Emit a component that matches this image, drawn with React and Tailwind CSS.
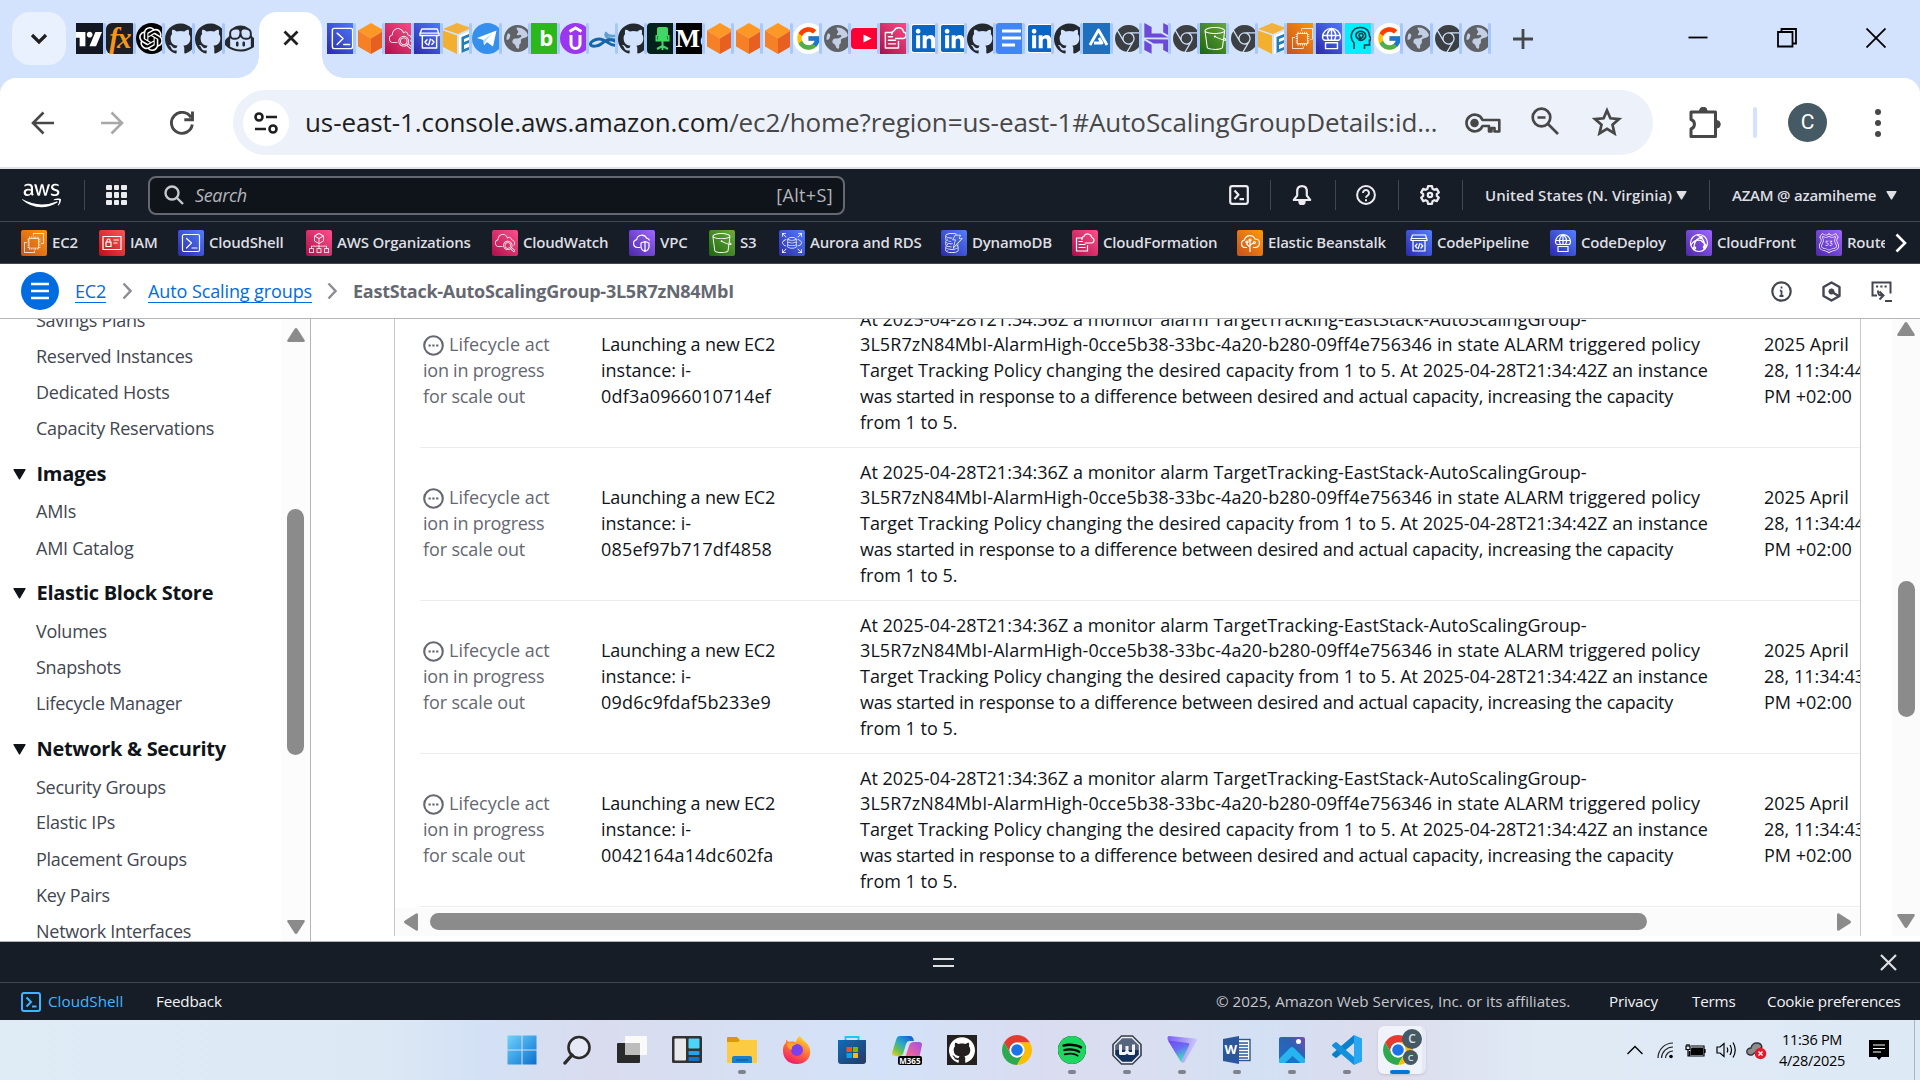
import {
  SiGithub, SiGithubcopilot, SiOpenai, SiTradingview, SiGooglechrome, SiHostinger,
  SiSpotify, SiAmazonec2, SiAmazons3, SiAmazonrds, SiAmazondynamodb,
  SiAmazoncloudwatch, SiAmazonroute53, SiAwsorganizations,
} from "react-icons/si";
import { FaAws, FaLinkedin, FaEarthAmericas } from "react-icons/fa6";
import { FcGoogle } from "react-icons/fc";

/* ---------- AWS service glyphs ---------- */

const ORANGE = "bg-linear-to-tr from-[#c8511b] to-[#ff9900]";
const RED = "bg-linear-to-tr from-[#bd0816] to-[#ff5252]";
const BLUE = "bg-linear-to-tr from-[#2e27ad] to-[#527fff]";
const PINK = "bg-linear-to-tr from-[#b0084d] to-[#ff4f8b]";
const PURPLE = "bg-linear-to-tr from-[#4d27aa] to-[#a166ff]";
const GREEN = "bg-linear-to-tr from-[#1b660f] to-[#6cae3e]";

function Glyph({ children, className = "size-full" }) {
  return (
    <svg viewBox="0 0 26 26" className={className} fill="none" stroke="currentColor" strokeWidth="1.2" strokeLinejoin="round" strokeLinecap="round">
      {children}
    </svg>
  );
}

const CloudShellGlyph = () => (
  <Glyph>
    <rect x="4.5" y="4.5" width="17" height="17" rx="1.5" />
    <path d="M8.5 8.5l5 4.5-5 5M14 18h5" />
  </Glyph>
);
const IamGlyph = () => (
  <Glyph>
    <rect x="4" y="6.5" width="18" height="13" />
    <rect x="7" y="12" width="5" height="4.5" />
    <path d="M8 12v-1.5a1.5 1.5 0 0 1 3 0V12M15 10h4.5M15 13h3" />
  </Glyph>
);
const VpcGlyph = () => (
  <Glyph>
    <path d="M11 17.5H8.5a4 4 0 0 1-.8-7.9 5.2 5.2 0 0 1 9.8-1.5 3.4 3.4 0 0 1 2.8 2" />
    <path d="M16 11.5l4 1.5v3.5c0 2.5-1.8 4.2-4 5-2.2-.8-4-2.5-4-5V13zM16 11.5v10" />
  </Glyph>
);
const CloudFormationGlyph = () => (
  <Glyph>
    <path d="M15.5 15.5V21h-11V8h6M7 11.5h3.5M7 14.5h6M7 17.5h6" />
    <path d="M13 13h6.5a2.8 2.8 0 0 0 .3-5.5 4.2 4.2 0 0 0-8-1 2.5 2.5 0 0 0-1.8 3" />
  </Glyph>
);
const BeanstalkGlyph = () => (
  <Glyph>
    <path d="M9.5 17.5H8a3.8 3.8 0 0 1-.5-7.5 5.5 5.5 0 0 1 10.5-1 4.2 4.2 0 0 1 .5 8.5h-2" />
    <path d="M13 21.5V11M13 17l-3-2.5V13M13 15l3.5-2" />
    <circle cx="13" cy="10" r="1" /><circle cx="10" cy="12" r="1" /><circle cx="17.3" cy="12.5" r="1" />
  </Glyph>
);
const CodePipelineGlyph = () => (
  <Glyph>
    <path d="M5 9.5L6.5 5h13L21 9.5v1H5zM5 8.5h16M7 10.5V21h12V10.5M11 14l-1.8 2 1.800 2M15 14l1.800 2-1.800 2M13.700 13.5l-1.400 5" />
  </Glyph>
);
const CodeDeployGlyph = () => (
  <Glyph>
    <path d="M5.5 12a7.5 7.5 0 0 1 15 0c0 1.3-1 2.5-2 2.5h-11c-1 0-2-1.2-2-2.5zM6 10.5h14M13 4.5v10M13 4.5c-4 3-4 7-2.5 10M13 4.5c4 3 4 7 2.5 10M8 16.5h10v5H8z" />
  </Glyph>
);
const CloudFrontGlyph = () => (
  <Glyph>
    <circle cx="13" cy="13" r="8.5" />
    <path d="M8 20c-.5-6 2-11 7-13M15 7c3.5 4 4.5 8 3 12.5M5 15c2-3.5 6-5.5 10-4.5M11 5l4 2M15 10.5l5.5 5" />
    <circle cx="15" cy="7.5" r="1.200" /><circle cx="8.5" cy="18" r="1.200" /><circle cx="18.5" cy="17" r="1.200" />
  </Glyph>
);

/* ---------- Favicons for the tab strip ---------- */

const fav = "size-[31px] shrink-0";

const Box = ({ tone, children, pad = "p-0" }) => (
  <span className={`flex items-center justify-center text-white ${fav} ${tone} ${pad}`}>{children}</span>
);
const TvIcon = () => <Box tone="bg-[#131722]"><SiTradingview className="size-7 -ml-2" /></Box>;
const FxIcon = () => (
  <Box tone="bg-[#1d1f24] rounded-md">
    <span className="-ml-1 font-['Liberation_Serif',serif] text-[29px] leading-none font-bold tracking-[-2px] text-[#f7941d] italic">fx</span>
  </Box>
);
const OpenAiIcon = () => <Box tone="bg-black rounded-full"><SiOpenai className="size-6" /></Box>;
const GhIcon = () => <SiGithub className={`${fav} text-[#24292f]`} />;
const CopilotIcon = () => <SiGithubcopilot className={`${fav} text-[#24292f]`} />;
const CsIcon = () => <Box tone={BLUE}><CloudShellGlyph /></Box>;
const CubeIcon = () => (
  <svg viewBox="0 0 31 31" className={fav}>
    <path d="M15 0L28 7.5 15 15.5 2 7.5z" fill="#fd9827" />
    <path d="M2 7.5l13 8V31L2 23.5z" fill="#f58025" />
    <path d="M28 7.5l-13 8V31l13-7.5z" fill="#e8601f" />
  </svg>
);
const CwIcon = () => <Box tone={PINK} pad="p-1"><SiAmazoncloudwatch className="size-full" /></Box>;
const CpIcon = () => <Box tone={BLUE}><CodePipelineGlyph /></Box>;
const CdIcon = () => <Box tone={BLUE}><CodeDeployGlyph /></Box>;
const CfIcon = () => <Box tone={PINK}><CloudFormationGlyph /></Box>;
const S3Icon = () => <Box tone={GREEN} pad="p-1"><SiAmazons3 className="size-full" /></Box>;
const Ec2Icon = () => <Box tone={ORANGE} pad="p-[5px]"><SiAmazonec2 className="size-full" /></Box>;
const PackageIcon = () => (
  <svg viewBox="0 0 31 31" className={fav}>
    <path d="M0 6L14 0l14 5-13 6z" fill="#f0b23c" />
    <path d="M0 7.5l14 5V31L0 24z" fill="#f2b02e" />
    <path d="M16 12.5L29 7v18l-13 6z" fill="#fff" />
    <path d="M18.5 14l9-3.5v3L21 16v3l6-2.5v3L21 22v4l7-2.800v2.800l-9.5 4z" fill="#1f7fb8" />
  </svg>
);
const TelegramIcon = () => (
  <svg viewBox="0 0 31 31" className={fav}>
    <circle cx="15.5" cy="15.5" r="15.5" fill="#3490ec" />
    <path d="M5 15L24.5 7.5 21 23.5l-6-4.300-3 3-.6-5.200z" fill="#fff" />
    <path d="M11.400 17l8.600-6.200-6.5 7.5-1.5 3.700z" fill="#bcdcf8" />
  </svg>
);
const GlobeIcon = () => (
  <span className="ml-0.5 flex size-[27px] shrink-0 rounded-full bg-[#c3cfe4]">
    <FaEarthAmericas className="size-[27px] shrink-0 -scale-x-100 text-[#5f6368]" />
  </span>
);
const BIcon = () => (
  <Box tone="bg-[#2bb81b]"><span className="-mt-1 font-['Open_Sans',sans-serif] text-[22px] leading-none font-bold">b</span></Box>
);
const UpIcon = () => (
  <svg viewBox="0 0 31 31" className={fav}>
    <circle cx="15.5" cy="15.5" r="15.5" fill="#9a35f0" />
    <path d="M11 12v9a4.5 4.5 0 0 0 9 0v-9M9.5 8.5l6-3.5 6 3.5" fill="none" stroke="#fff" strokeWidth="3" />
  </svg>
);
const WhaleIcon = () => (
  <svg viewBox="0 0 31 31" className={fav} fill="none" strokeLinecap="round">
    <path d="M17 10c2 4 9 3 11 2M17 10c-2 5 4 6 10 6" stroke="#5f9fd0" strokeWidth="2.400" />
    <path d="M27 22c-6 2-9-6-17-6-4 0-9 3-8.500 5.500C2.500 24 9 23.500 12 21s7-6 14-3" stroke="#1566a8" strokeWidth="3" />
  </svg>
);
const ChairIcon = () => (
  <svg viewBox="0 0 31 31" className={fav}>
    <rect width="31" height="31" rx="4" fill="#04211b" />
    <rect x="10" y="4" width="11" height="10" rx="2" fill="#3fd864" />
    <path d="M9.5 12v5.5h12V12M15.5 18v9M10 26l5.500-3 5.500 3" stroke="#3fd864" strokeWidth="2" fill="none" />
    <path d="M11 14h9v4h-9z" fill="#3fd864" />
  </svg>
);
const MediumIcon = () => (
  <Box tone="bg-black"><span className="ml-1 font-['Liberation_Serif',serif] text-[26px] leading-none font-bold">Mc</span></Box>
);
const GIcon = () => <Box tone="bg-white rounded-full"><FcGoogle className="size-[27px]" /></Box>;
const YtIcon = () => (
  <svg viewBox="0 0 31 31" className={fav}>
    <rect y="5" width="31" height="21" rx="4" fill="#ff0033" />
    <path d="M12.5 11.5l8 4-8 4z" fill="#fff" />
  </svg>
);
const InIcon = () => (
  <span className="ml-0.5 flex size-[29px] shrink-0 items-center justify-center overflow-hidden rounded-[3px] bg-[linear-gradient(#fff,#fff)]">
    <FaLinkedin className="size-[31px] shrink-0 text-[#0a66c2]" />
  </span>
);
const DocsIcon = () => (
  <svg viewBox="0 0 31 31" className={fav}>
    <rect width="31" height="31" rx="3" fill="#4285f4" />
    <path d="M6 8h19M6 15h19M6 22h13" stroke="#fff" strokeWidth="3" />
  </svg>
);
const AIcon = () => (
  <svg viewBox="0 0 31 31" className={fav}>
    <rect width="31" height="31" fill="#1f6fbf" />
    <path d="M7 22L15.5 7l8.500 15M11 20h8l-3-5" fill="none" stroke="#fff" strokeWidth="2.800" strokeLinejoin="round" />
  </svg>
);
const GreyChrome = () => <SiGooglechrome className="ml-0.5 size-[27px] shrink-0 text-[#3c4043]" />;
const HIcon = () => <SiHostinger className={`${fav} text-[#6b4bd6]`} />;
const HeadIcon = () => (
  <svg viewBox="0 0 31 31" className={fav}>
    <rect width="31" height="31" fill="#00f0ff" />
    <path d="M9 26v-6c-5-5-3-15 6-15.500 7-.300 9.500 4.500 9.500 8.500l2 4h-2v5h-5v4M16 14.500a2 2 0 1 1 2-2.500 3.500 3.500 0 1 1-5.500-2.500c4-3 9 0 8 4.500-.700 3-4.500 4-7 3" fill="none" stroke="#0b3d46" strokeWidth="1.600" />
  </svg>
);

const leftTabs = [TvIcon, FxIcon, OpenAiIcon, GhIcon, GhIcon, CopilotIcon];
const rightTabs = [
  CsIcon, CubeIcon, CwIcon, CpIcon, PackageIcon, TelegramIcon, GlobeIcon, BIcon, UpIcon, WhaleIcon,
  GhIcon, ChairIcon, MediumIcon, CubeIcon, CubeIcon, CubeIcon, GIcon, GlobeIcon, YtIcon, CfIcon,
  InIcon, InIcon, GhIcon, DocsIcon, InIcon, GhIcon, AIcon, GreyChrome, HIcon, GreyChrome,
  S3Icon, GreyChrome, PackageIcon, Ec2Icon, CdIcon, HeadIcon, GIcon, GlobeIcon, GreyChrome, GlobeIcon,
];

function MiniTab({ icon: Icon, divider = true }) {
  return (
    <div className="flex h-[31px] min-w-0 flex-1 items-center">
      <div className="flex h-full min-w-0 flex-1 items-center overflow-hidden"><Icon /></div>
      <span className={divider ? "h-[31px] w-[3px] shrink-0 rounded-full bg-[#a8c7fa]" : "w-px shrink-0"} />
    </div>
  );
}

function TabStrip() {
  return (
    <div className="flex h-[78px] items-start">
      <div className="mt-3 ml-3 flex h-[53px] w-[54px] shrink-0 items-center justify-center rounded-[18px] bg-[#e9f0fe]">
        <svg viewBox="0 0 18 12" className="h-3 w-[18px]" fill="none" stroke="#1f1f1f" strokeWidth="3.200"><path d="M2 2l7 7 7-7" /></svg>
      </div>
      <div className="mt-[23px] ml-[10px] flex w-[179px]">
        {leftTabs.map((I, i) => <MiniTab key={i} icon={I} divider={i < 5} />)}
      </div>
      <div className="relative mt-3 ml-1 flex h-[66px] w-[63px] shrink-0 items-center justify-center rounded-t-[18px] bg-white pb-3.5">
        <span className="absolute bottom-0 -left-[22px] size-[22px] bg-[radial-gradient(circle_at_top_left,transparent_21.5px,#fff_22px)]" />
        <span className="absolute -right-[22px] bottom-0 size-[22px] bg-[radial-gradient(circle_at_top_right,transparent_21.5px,#fff_22px)]" />
        <svg viewBox="0 0 16 16" className="size-4" stroke="#1f1f1f" strokeWidth="2.800"><path d="M1.5 1.5l13 13M14.5 1.5l-13 13" /></svg>
      </div>
      <div className="mt-[23px] ml-[5px] flex w-[1164px]">
        {rightTabs.map((I, i) => <MiniTab key={i} icon={I} />)}
      </div>
      <svg viewBox="0 0 20 20" className="mt-[29px] ml-[22px] size-5 shrink-0" stroke="#474747" strokeWidth="2.800"><path d="M10 0v20M0 10h20" /></svg>
      <div className="mt-[28px] mr-[34px] ml-auto flex items-center gap-[69px]">
        <svg viewBox="0 0 20 20" className="size-5" stroke="#000" strokeWidth="1.800"><path d="M.5 9.500h19" /></svg>
        <svg viewBox="0 0 20 20" className="size-5" fill="none" stroke="#000" strokeWidth="1.800"><path d="M1 4h14.500v14.500H1zM4.500 3.500V1H19v14.500h-3" /></svg>
        <svg viewBox="0 0 20 20" className="size-5" stroke="#000" strokeWidth="1.800"><path d="M.5 .5l19 19M19.500 .5l-19 19" /></svg>
      </div>
    </div>
  );
}

function Toolbar() {
  return (
    <div className="flex h-[91px] items-center rounded-t-[16px] border-b-2 border-[#e1e3e1] bg-white">
      <svg viewBox="0 0 24 24" className="ml-[31px] size-6" fill="none" stroke="#474747" strokeWidth="2.600"><path d="M23 12H2M12.500 1.500L2 12l10.500 10.500" /></svg>
      <svg viewBox="0 0 24 24" className="ml-[45px] size-6" fill="none" stroke="#a8a8a8" strokeWidth="2.600"><path d="M1 12h21M11.500 1.500L22 12 11.500 22.500" /></svg>
      <svg viewBox="0 0 24 24" className="ml-[46px] size-6" fill="none" stroke="#474747" strokeWidth="2.900"><path d="M22.300 13.500A10.500 10.500 0 1 1 21 6.500M22.500 .5v8.200h-8.200" /></svg>
      <div className="ml-[39px] flex h-[65px] w-[1420px] items-center rounded-full bg-[#ecf1fa]">
        <span className="ml-2.5 flex size-[46px] items-center justify-center rounded-full bg-white">
          <svg viewBox="0 0 24 24" className="size-6" fill="none" stroke="#1f1f1f" strokeWidth="2.600"><circle cx="5" cy="6" r="3.500" /><circle cx="19" cy="18" r="3.500" /><path d="M12 6h11M1 18h11" /></svg>
        </span>
        <span className="ml-4 w-[1145px] font-['Open_Sans',sans-serif] text-[26px] tracking-[-0.0035em] whitespace-nowrap text-[#474747]">
          <span className="text-[#1f1f1f]">us-east-1.console.aws.amazon.com</span>/ec2/home?region=us-east-1#AutoScalingGroupDetails:id…
        </span>
        <svg viewBox="0 0 36 20" className="ml-[15px] h-5 w-9 shrink-0" fill="none" stroke="#474747" strokeWidth="2.600">
          <circle cx="9.500" cy="10" r="3" fill="#474747" />
          <path d="M17.500 7A8.300 8.300 0 1 0 17.500 13h6.500v5.500h2.500V15h3v3.500h4.800V7z" strokeLinejoin="round" />
        </svg>
        <svg viewBox="0 0 28 28" className="mt-[-3px] ml-[30px] size-7 shrink-0" fill="none" stroke="#474747" strokeWidth="2.700"><circle cx="10.500" cy="10.500" r="8.800" /><path d="M17 17l10 10M6.500 10.500h8" /></svg>
        <svg viewBox="0 0 32 32" className="mt-[-2px] ml-8 size-8 shrink-0" fill="none" stroke="#474747" strokeWidth="2.700"><path d="M16 4.500l3.400 7.800 8.600.800-6.500 5.700 2 8.600-7.500-4.600-7.500 4.600 2-8.600L4 13.100l8.600-.800z" /></svg>
      </div>
      <svg viewBox="0 0 32 32" className="ml-9 size-8" fill="none" stroke="#474747" strokeWidth="3" strokeLinejoin="round">
        <path d="M2 5h24.500v24.500H2v-7.500a5 5 0 0 0 0-9.500z" />
        <path d="M10.500 4a3.800 3.800 0 0 1 7.600 0zM27.500 13.500a3.800 3.800 0 0 1 0 7.600z" fill="#474747" strokeWidth="1" />
      </svg>
      <span className="ml-8 h-[31px] w-1 rounded-full bg-[#d3e3fd]" />
      <span className="ml-[31px] flex size-[39px] items-center justify-center rounded-full bg-[#455a64] font-[Roboto,sans-serif] text-[21px] text-white">C</span>
      <span className="ml-[48px] flex flex-col gap-[5px]">
        <i className="size-1.5 rounded-full bg-[#474747]" /><i className="size-1.5 rounded-full bg-[#474747]" /><i className="size-1.5 rounded-full bg-[#474747]" />
      </span>
    </div>
  );
}

/* ---------- AWS console header ---------- */

const Caret = ({ className = "" }) => (
  <svg viewBox="0 0 12 10" className={`h-[9px] w-[11px] ${className}`} fill="currentColor"><path d="M1 0h10q1 0 .5 1L6.700 9.300q-.700 1-1.400 0L.5 1Q0 0 1 0z" /></svg>
);
const Divider = ({ className }) => <span className={`h-[30px] w-px shrink-0 bg-[#424650] ${className}`} />;

function ConsoleHeader() {
  return (
    <div className="flex h-[53px] shrink-0 items-center border-b border-[#424650] bg-[#161d26] text-[15px] font-semibold text-[#dedee3]">
      <FaAws className="ml-[22px] size-[39px] shrink-0 text-white" />
      <Divider className="ml-[23px]" />
      <div className="ml-[21px] grid grid-cols-3 gap-[2px]">
        {Array.from({ length: 9 }, (_, i) => <i key={i} className="size-[5.5px] rounded-[1px] bg-[#ebebf0]" />)}
      </div>
      <div className="ml-[21.500px] flex h-[39px] w-[697px] shrink-0 items-center rounded-lg border-2 border-[#656871] bg-[#0f141a] text-lg font-normal text-[#b4b4bb]">
        <svg viewBox="0 0 20 20" className="ml-3.5 size-5" fill="none" stroke="#c6c6cd" strokeWidth="2.400"><circle cx="8" cy="8" r="6.500" /><path d="M12.500 12.500L19 19" /></svg>
        <span className="ml-[11px] tracking-[-0.02em] italic">Search</span>
        <span className="mr-[10px] ml-auto tracking-[0.02em]">[Alt+S]</span>
      </div>
      <svg viewBox="0 0 20 20" className="ml-[384px] size-5 shrink-0" fill="none" stroke="#ebebf0" strokeWidth="2.200" strokeLinejoin="round"><rect x="1.200" y="1.200" width="17.600" height="17.600" rx="2" /><path d="M5.500 5.500l4 4.200-4 4.300M10.500 14.200h4.500" /></svg>
      <Divider className="ml-[21px]" />
      <svg viewBox="0 0 20 20" className="ml-[21px] size-5 shrink-0" fill="none" stroke="#ebebf0" strokeWidth="2.200" strokeLinejoin="round"><path d="M10 1.200c-3.300 0-4.800 2.300-4.800 5.300v4L1.800 15h16.400l-3.400-4.500v-4c0-3-1.500-5.300-4.800-5.300z" /><path d="M7 16.500a3 3 0 0 0 6 0z" fill="#ebebf0" strokeWidth="1.500" /></svg>
      <Divider className="ml-[23px]" />
      <svg viewBox="0 0 20 20" className="ml-5 size-5 shrink-0" fill="none" stroke="#ebebf0" strokeWidth="2"><circle cx="10" cy="10" r="8.900" /><path d="M7 8a3 3 0 1 1 4.600 2.500c-1.100.700-1.600 1-1.600 2.200M10 14.200v2" /></svg>
      <Divider className="ml-[22px]" />
      <svg viewBox="0 0 20 20" className="ml-[21px] size-5 shrink-0" fill="none" stroke="#ebebf0" strokeWidth="2.200" strokeLinejoin="round"><path d="M8 1.200h4l.5 2.600 1.800 1 2.500-.900 2 3.500-2 1.700v1.800l2 1.700-2 3.500-2.500-.900-1.800 1-.5 2.600H8l-.5-2.600-1.800-1-2.500.900-2-3.500 2-1.700V9.100l-2-1.700 2-3.500 2.500.900 1.800-1z" /><circle cx="10" cy="10" r="2.200" /></svg>
      <Divider className="ml-[22px]" />
      <span className="ml-[22px] w-[184px] tracking-[0.004em] whitespace-nowrap">United States (N. Virginia)</span>
      <Caret className="ml-[7px]" />
      <Divider className="ml-[22px]" />
      <span className="ml-[22px] w-[148px] tracking-[-0.015em] whitespace-nowrap">AZAM @ azamiheme</span>
      <Caret className="ml-1.5" />
    </div>
  );
}

const Pad = ({ icon: Icon }) => <Icon className="size-full p-[3px]" />;
const services = [
  { name: "EC2", w: "w-[78px]", tone: ORANGE, icon: <Pad icon={SiAmazonec2} /> },
  { name: "IAM", w: "w-[79px]", tone: RED, icon: <IamGlyph /> },
  { name: "CloudShell", w: "w-[128px]", tone: BLUE, icon: <CloudShellGlyph /> },
  { name: "AWS Organizations", w: "w-[186px]", tone: PINK, icon: <Pad icon={SiAwsorganizations} /> },
  { name: "CloudWatch", w: "w-[137px]", tone: PINK, icon: <Pad icon={SiAmazoncloudwatch} /> },
  { name: "VPC", w: "w-[80px]", tone: PURPLE, icon: <VpcGlyph /> },
  { name: "S3", w: "w-[70px]", tone: GREEN, icon: <Pad icon={SiAmazons3} /> },
  { name: "Aurora and RDS", w: "w-[162px]", tone: BLUE, icon: <Pad icon={SiAmazonrds} /> },
  { name: "DynamoDB", w: "w-[131px]", tone: BLUE, icon: <Pad icon={SiAmazondynamodb} /> },
  { name: "CloudFormation", w: "w-[165px]", tone: PINK, icon: <CloudFormationGlyph /> },
  { name: "Elastic Beanstalk", w: "w-[169px]", tone: ORANGE, icon: <BeanstalkGlyph /> },
  { name: "CodePipeline", w: "w-[144px]", tone: BLUE, icon: <CodePipelineGlyph /> },
  { name: "CodeDeploy", w: "w-[136px]", tone: BLUE, icon: <CodeDeployGlyph /> },
  { name: "CloudFront", w: "w-[130px]", tone: PURPLE, icon: <CloudFrontGlyph /> },
  { name: "Route 53", w: "w-[69px]", tone: PURPLE, icon: <Pad icon={SiAmazonroute53} /> },
];

function ServiceBar() {
  return (
    <div className="flex h-[42px] shrink-0 items-center border-b border-[#424650] bg-[#161d26] pl-[21px] text-[#dedee3]">
      {services.map((s) => (
        <div key={s.name} className={`flex shrink-0 items-center gap-[5px] overflow-hidden ${s.w}`}>
          <span className={`size-[26px] shrink-0 rounded-[2px] text-white ${s.tone}`}>{s.icon}</span>
          <span className="text-[15px] font-semibold tracking-[-0.014em] whitespace-nowrap">{s.name}</span>
        </div>
      ))}
      <svg viewBox="0 0 12 20" className="ml-2.5 h-5 w-3" fill="none" stroke="#fff" strokeWidth="2.600"><path d="M1.5 1.5L10 10l-8.500 8.500" /></svg>
    </div>
  );
}

const Crumb = ({ className }) => (
  <svg viewBox="0 0 10 18" className={`h-[18px] w-2.5 ${className}`} fill="none" stroke="#8c8c94" strokeWidth="2.400"><path d="M1.5 1.5L8.500 9l-7 7.500" /></svg>
);

function Breadcrumbs() {
  return (
    <div className="flex h-[55px] shrink-0 items-center border-b border-[#b4b4bb] bg-white text-lg">
      <span className="ml-[21px] flex size-[38px] items-center justify-center rounded-full bg-[#006ce0]">
        <svg viewBox="0 0 18 18" className="size-[18px]" stroke="#fff" strokeWidth="2.400"><path d="M0 2h18M0 9h18M0 16h18" /></svg>
      </span>
      <a className="ml-4 border-b border-[#006ce0] leading-[22px] tracking-[-0.01em] text-[#006ce0]">EC2</a>
      <Crumb className="ml-4" />
      <a className="ml-4 border-b border-[#006ce0] leading-[22px] tracking-[-0.006em] whitespace-nowrap text-[#006ce0]">Auto Scaling groups</a>
      <Crumb className="ml-[15px]" />
      <span className="ml-4 font-bold tracking-[-0.015em] text-[#656871]">EastStack-AutoScalingGroup-3L5R7zN84MbI</span>
      <div className="mr-7 ml-auto flex items-center gap-[29px]">
        <svg viewBox="0 0 21 21" className="size-[21px]" fill="none" stroke="#424650" strokeWidth="2.200"><circle cx="10.500" cy="10.500" r="9.200" /><path d="M10.500 9.500v6M10.500 5.500v2M8.800 9.700h1.700M8.500 15h4" strokeWidth="1.800" /></svg>
        <svg viewBox="0 0 21 21" className="size-[21px]" fill="none" stroke="#424650" strokeWidth="2.400" strokeLinejoin="round"><path d="M10.500 1.500l8 4.500v9l-8 4.500-8-4.500V6z" /><circle cx="10.500" cy="10.500" r="2.600" fill="#424650" strokeWidth="1" /><path d="M11 11l6.500 4" /></svg>
        <svg viewBox="0 0 21 21" className="size-[21px]" fill="none" stroke="#424650" strokeWidth="2"><path d="M6 14.500H1.500v-13h18v11M5 5.500h2.200M9.300 5.500h2.200M13.500 5.500h2.200M7 9.500c0 4 .5 5 5 5M8.500 10.500l4 4-4 4M14 20h7" /></svg>
      </div>
    </div>
  );
}

/* ---------- Page body ---------- */

const nav = [
  ["Savings Plans", "mt-0"], ["Reserved Instances", "mt-0"], ["Dedicated Hosts", "mt-0"], ["Capacity Reservations", "mt-0"],
  ["Images", "mt-2.5", true], ["AMIs", "mt-px"], ["AMI Catalog", "mt-px"],
  ["Elastic Block Store", "mt-[9px]", true], ["Volumes", "mt-0.5"], ["Snapshots", "mt-0"], ["Lifecycle Manager", "mt-0"],
  ["Network & Security", "mt-2.5", true], ["Security Groups", "mt-0.5"], ["Elastic IPs", "-mt-px"],
  ["Placement Groups", "mt-px"], ["Key Pairs", "mt-0"], ["Network Interfaces", "mt-0"],
];

const Arrow = ({ className }) => (
  <svg viewBox="0 0 18 14" className={`h-3.5 w-[18px] shrink-0 ${className}`} fill="#8b8b8b"><path d="M1.5 14h15q2-.3 1-2L10.500 1Q9 -1 7.500 1L.5 12q-1 1.700 1 2z" /></svg>
);

function Sidebar() {
  return (
    <aside className="flex w-[311px] shrink-0 overflow-hidden border-r border-[#b4b4bb]">
      <nav className="-mt-[17px] flex flex-1 flex-col">
        {nav.map(([label, gap, heading]) =>
          heading ? (
            <div key={label} className={`flex h-9 shrink-0 items-center text-[20px] font-bold tracking-[-0.015em] text-[#0f141a] ${gap}`}>
              <svg viewBox="0 0 13 11" className="mr-[11px] ml-[12.500px] h-[11px] w-[13px]" fill="currentColor"><path d="M1 0h11q1 .2.5 1L7.200 10q-.7 1-1.400 0L.5 1Q0 .2 1 0z" /></svg>
              {label}
            </div>
          ) : (
            <div key={label} className={`h-9 shrink-0 pl-9 text-lg leading-9 tracking-[-0.014em] text-[#424650] ${gap}`}>{label}</div>
          ),
        )}
      </nav>
      <div className="flex w-[29px] flex-col items-center bg-[#fcfcfc]">
        <Arrow className="mt-[9px]" />
        <span className="mt-[167px] h-[246px] w-[17px] rounded-full bg-[#8b8b8b]" />
        <Arrow className="mt-[165px] rotate-180" />
      </div>
    </aside>
  );
}

const activities = [
  { id: "0df3a0966010714ef", sec: "44" },
  { id: "085ef97b717df4858", sec: "44" },
  { id: "09d6c9fdaf5b233e9", sec: "43" },
  { id: "0042164a14dc602fa", sec: "43" },
];

function ActivityRow({ id, sec }) {
  return (
    <div className="flex h-[153px] shrink-0 items-center border-b border-[#ebebf0] text-lg leading-[25.8px] whitespace-nowrap text-[#0f141a]">
      <div className="w-[178px] shrink-0 pl-[3px] text-[#656871]">
        <div className="flex items-center gap-[5px]">
          <svg viewBox="0 0 21 21" className="size-[21px]" fill="none" stroke="#656871" strokeWidth="2.100"><circle cx="10.500" cy="10.500" r="9.300" /><path d="M5.500 10.500h2.300M9.300 10.500h2.300M13.100 10.500h2.300" /></svg>
          Lifecycle act
        </div>
        <div className="tracking-[-0.0135em]">ion in progress</div>
        <div className="tracking-[-0.007em]">for scale out</div>
      </div>
      <div className="w-[259px] shrink-0 pl-[3px]">
        <div className="tracking-[-0.009em]">Launching a new EC2</div>
        <div>instance: i-</div>
        <div className="tracking-[0.011em]">{id}</div>
      </div>
      <div className="w-[904px] shrink-0 pl-[3px]">
        <div className="tracking-[0.001em]">At 2025-04-28T21:34:36Z a monitor alarm TargetTracking-EastStack-AutoScalingGroup-</div>
        <div className="tracking-[0.005em]">3L5R7zN84MbI-AlarmHigh-0cce5b38-33bc-4a20-b280-09ff4e756346 in state ALARM triggered policy</div>
        <div className="tracking-[-0.0014em]">Target Tracking Policy changing the desired capacity from 1 to 5. At 2025-04-28T21:34:42Z an instance</div>
        <div className="tracking-[-0.0126em]">was started in response to a difference between desired and actual capacity, increasing the capacity</div>
        <div>from 1 to 5.</div>
      </div>
      <div className="shrink-0 pl-[3px]">
        <div>2025 April</div>
        <div>28, 11:34:{sec}</div>
        <div>PM +02:00</div>
      </div>
    </div>
  );
}

function Main() {
  return (
    <main className="flex flex-1">
      <div className="ml-[83px] flex h-[617px] w-[1467px] flex-col border-x border-[#c6c6cd]">
        <div className="flex h-[589px] flex-col overflow-hidden pl-[25px]">
          <div className="-mt-6 flex flex-col">
            {activities.map((a) => <ActivityRow key={a.id} {...a} />)}
          </div>
        </div>
        <div className="flex h-7 items-center bg-[#fbfbfb]">
          <Arrow className="ml-[7px] -rotate-90" />
          <span className="ml-2.5 -mt-px h-[17px] w-[1217px] rounded-full bg-[#8b8b8b]" />
          <Arrow className="ml-[188px] rotate-90" />
        </div>
      </div>
      <div className="ml-auto flex h-[617px] w-7 flex-col items-center bg-[#fbfbfb]">
        <Arrow className="mt-[3px]" />
        <span className="mt-[245px] h-[136px] w-[17px] rounded-full bg-[#8b8b8b]" />
        <Arrow className="mt-[197px] rotate-180" />
      </div>
    </main>
  );
}

function ConsoleFooter() {
  return (
    <div className="flex h-[79px] shrink-0 flex-col border-t border-[#b4b4bb] bg-[#161d26]">
      <div className="flex h-[41px] items-center border-b border-[#424650]">
        <span className="ml-[933px] flex flex-col gap-[5px]"><i className="h-0.5 w-[21px] bg-[#dedee3]" /><i className="h-0.5 w-[21px] bg-[#dedee3]" /></span>
        <svg viewBox="0 0 17 17" className="mr-[23px] ml-auto size-[17px]" stroke="#dedee3" strokeWidth="2.200"><path d="M1 1l15 15M16 1L1 16" /></svg>
      </div>
      <div className="flex flex-1 items-center text-[15.2px] font-medium tracking-[-0.012em] whitespace-nowrap text-[#f3f3f7]">
        <svg viewBox="0 0 20 20" className="ml-[21px] size-5" fill="none" stroke="#42b4ff" strokeWidth="2"><rect x="1" y="1" width="18" height="18" rx="2" /><path d="M5.500 5.500l4.500 4.500-4.500 4.500M11 14.500h4.500" /></svg>
        <span className="ml-[7px] w-[108px] tracking-[0.002em] text-[#42b4ff]">CloudShell</span>
        <span>Feedback</span>
        <span className="ml-auto w-[393px] font-normal tracking-[0em] text-[#c6c6cd]">© 2025, Amazon Web Services, Inc. or its affiliates.</span>
        <span className="w-[83px]">Privacy</span>
        <span className="w-[75px]">Terms</span>
        <span className="w-[153px]">Cookie preferences</span>
      </div>
    </div>
  );
}

/* ---------- Taskbar ---------- */

const ChromeLogo = () => (
  <svg viewBox="0 0 48 48" className="size-[30px]">
    <path d="M24 12h20.780A24 24 0 0 0 3.220 12l10.390 18A12 12 0 0 1 24 12z" fill="#e33b2e" />
    <path d="M34.390 30L24 48A24 24 0 0 1 3.220 12l10.390 18a12 12 0 0 0 20.780 0z" fill="#2da94f" />
    <path d="M24 12h20.780A24 24 0 0 1 24 48l10.390-18A12 12 0 0 0 24 12z" fill="#fdbd00" />
    <circle cx="24" cy="24" r="12" fill="#fff" /><circle cx="24" cy="24" r="9.300" fill="#1a73e8" />
  </svg>
);
const Svg = ({ children }) => <svg viewBox="0 0 30 30" className="size-[30px]">{children}</svg>;

const taskIcons = [
  { el: (
    <Svg>
      <defs><linearGradient id="win" x1="0" y1="0" x2="1" y2="1"><stop offset="0" stopColor="#6fd3fb" /><stop offset="1" stopColor="#0b6fd0" /></linearGradient></defs>
      <path d="M.5 .5h14v14H.5zM15.500 .5h14v14h-14zM.5 15.500h14v14H.5zM15.500 15.500h14v14h-14z" fill="url(#win)" />
    </Svg>
  ) },
  { el: <Svg><circle cx="17" cy="12.500" r="10.500" fill="#e6eaf6" stroke="#2b2b2b" strokeWidth="2.600" /><path d="M10 20l-7 8" stroke="#2b2b2b" strokeWidth="3.400" strokeLinecap="round" /></Svg> },
  { el: <Svg><rect x="0" y="8" width="23" height="20" rx="1" fill="#2a2a2a" /><rect x="8" y="1" width="22" height="19" rx="1" fill="#fafafa" /><rect x="8" y="8" width="15" height="12" fill="#bdbdbd" /></Svg> },
  { el: (
    <Svg>
      <rect y="1" width="30" height="27" rx="1.500" fill="#333" />
      <rect x="2.500" y="3.500" width="11.500" height="22" rx="1" fill="#e9e9ec" />
      <rect x="16.500" y="3.500" width="11" height="10" rx="1" fill="#4cd4fb" /><rect x="16.500" y="16" width="11" height="4" rx="1" fill="#23a4e8" /><rect x="16.500" y="22" width="11" height="4" rx="1" fill="#0f74d4" />
    </Svg>
  ) },
  { dot: true, el: (
    <Svg>
      <path d="M0 3q0-1 1-1h9l3 3h16q1 0 1 1v4H0z" fill="#d99a07" />
      <path d="M0 7h11l2-2h17v22q0 1-1 1H1q-1 0-1-1z" fill="#fccb42" />
      <path d="M5 28v-5q0-2 2-2h16q2 0 2 2v5z" fill="#1680d3" /><path d="M9 25h12" stroke="#0b4f91" />
    </Svg>
  ) },
  { el: (
    <Svg>
      <defs><linearGradient id="ff" x1=".8" y1="0" x2=".3" y2="1"><stop offset="0" stopColor="#ffe226" /><stop offset=".5" stopColor="#ff7139" /><stop offset="1" stopColor="#f0186a" /></linearGradient></defs>
      <path d="M18 1c1 3 5 5 7.500 8 6 8 2 20-10.500 20C4 29 .5 21 1 14c.2-3 1.500-5 3-6.500V4.500L7 7c2-1.200 5-1.200 7 .3C14 5 16 2 18 1z" fill="url(#ff)" />
      <circle cx="15" cy="15" r="6" fill="#7b3ff2" /><path d="M5 8.500c4-2 7 .5 9 1.500-3 0-5 2-4 4.500-3 0-5-2-5-6z" fill="#ffa42b" />
    </Svg>
  ) },
  { el: (
    <Svg>
      <defs><linearGradient id="st" x1="0" y1="0" x2="1" y2="1"><stop offset="0" stopColor="#0f6cbd" /><stop offset="1" stopColor="#243a5e" /></linearGradient></defs>
      <path d="M8.500 7V2h13v5" fill="none" stroke="#1ec8f5" strokeWidth="2" />
      <path d="M1 5h28v21q0 3-3 3H4q-3 0-3-3z" fill="url(#st)" />
      <path d="M9.500 12H15v5H9.500z" fill="#f25022" /><path d="M16 12h5v5h-5z" fill="#7fba00" /><path d="M9.500 18H15v5H9.500z" fill="#00a4ef" /><path d="M16 18h5v5h-5z" fill="#ffb900" />
    </Svg>
  ) },
  { el: (
    <div className="relative size-[30px]">
      <Svg>
        <defs>
          <linearGradient id="ca" x1=".8" y1="0" x2="0" y2="1"><stop offset="0" stopColor="#1a5fd8" /><stop offset=".4" stopColor="#2aa7c9" /><stop offset=".7" stopColor="#6cc24a" /><stop offset="1" stopColor="#ffd028" /></linearGradient>
          <linearGradient id="cb" x1="1" y1="0" x2="0" y2="1"><stop offset="0" stopColor="#a050e8" /><stop offset=".6" stopColor="#f0659a" /><stop offset="1" stopColor="#ff9050" /></linearGradient>
        </defs>
        <path d="M8 1h10q3 0 4 5h-5q-2 0-3 3l-3 10q-1 2-3 2H3q-3 0-3-3L4 5q1-4 4-4z" fill="url(#ca)" />
        <path d="M22 7h5q3 0 3 3l-3 14q-1 4-4 4H12q-3 0-4-5h2q3 0 4-3l3-9q1-4 5-4z" fill="url(#cb)" />
      </Svg>
      <span className="absolute right-0 bottom-0 rounded-xs bg-black px-px text-[8px] leading-[9px] font-bold text-white">M365</span>
    </div>
  ) },
  { el: <span className="flex size-[30px] items-center justify-center bg-[#24201f]"><SiGithub className="size-[26px] text-white" /></span> },
  { el: <ChromeLogo /> },
  { dot: true, el: <span className="flex size-7 rounded-full bg-black"><SiSpotify className="size-7 text-[#1ed760]" /></span> },
  { dot: true, el: (
    <Svg>
      <path d="M9.500 1h11L29 9.500v11L20.500 29h-11L1 20.500v-11z" fill="#12305c" stroke="#3b3f46" strokeWidth="1.600" />
      <path d="M10 2.500h10l7.500 7.500v5h-25v-5z" fill="#56657d" />
      <path d="M10 2.500h10l7.500 7.500v10L20 27.500H10L2.500 20V10z" fill="none" stroke="#e9ecf2" strokeWidth="1.400" />
      <path d="M8.500 9.500v9h4.500l2-2 2 2h4.500v-9M15 11v6" fill="none" stroke="#f1f3f7" strokeWidth="3" strokeLinejoin="round" />
    </Svg>
  ) },
  { dot: true, el: (
    <Svg>
      <defs>
        <linearGradient id="pa" x1="0" y1="0" x2=".5" y2="1"><stop offset="0" stopColor="#7045f5" /><stop offset=".5" stopColor="#6a6cf5" /><stop offset="1" stopColor="#3fe0c0" /></linearGradient>
        <linearGradient id="pb" x1="0" y1="0" x2="1" y2=".3"><stop offset="0" stopColor="#7b5cf5" /><stop offset="1" stopColor="#cfc9fb" /></linearGradient>
      </defs>
      <path d="M2 1l26 2.500q3 .5 1.500 3L17.500 27q-1.500 2-3 0L1 5Q-.5 2 2 1z" fill="url(#pb)" />
      <path d="M1 5.500L21 8q2 .5 1 2.500L14.500 26q-.8 1-1.500-.5z" fill="url(#pa)" />
    </Svg>
  ) },
  { dot: true, el: (
    <div className="relative size-[30px]">
      <Svg>
        <rect x="14" y="4.500" width="14" height="21" fill="#fff" stroke="#2b579a" strokeWidth="1.400" />
        <path d="M17 8h9M17 11h9M17 14h9M17 17h9M17 20h9M17 23h9" stroke="#2b579a" strokeWidth="1.500" />
        <path d="M1 4l16-3v28L1 26z" fill="#2b579a" />
      </Svg>
      <span className="absolute inset-y-0 left-[3px] flex items-center text-[13px] font-bold text-white">W</span>
    </div>
  ) },
  { dot: true, el: (
    <Svg>
      <defs><linearGradient id="ph" x1="0" y1="1" x2="1" y2="0"><stop offset="0" stopColor="#1a6fd0" /><stop offset=".6" stopColor="#2b62b4" /><stop offset="1" stopColor="#7a4bb0" /></linearGradient></defs>
      <rect x="2" y="2" width="26" height="26" rx="2" fill="url(#ph)" /><circle cx="21.500" cy="6.500" r="2.500" fill="#fff" />
      <path d="M2 24l11-11q2-2 4 0l11 11v2q0 2-2 2H4q-2 0-2-2z" fill="#25b5f0" /><path d="M8 28l7.500-7 8 7z" fill="#1674cc" />
    </Svg>
  ) },
  { dot: true, el: (
    <Svg>
      <path d="M22 0l8 3.500v23L22 30z" fill="#27a7f0" />
      <path d="M22 0v8L5 22.500q-1 .8-2 0l-2.500-2q-1-1 0-2z" fill="#0a7fcb" />
      <path d="M22 30v-8L5 7.500q-1-.8-2 0l-2.500 2q-1 1 0 2z" fill="#1290dc" />
    </Svg>
  ) },
];

function Taskbar() {
  return (
    <div className="flex h-[60px] shrink-0 items-center bg-[linear-gradient(90deg,#dfebf5_0%,#dce8f4_20%,#d3e1f6_25%,#d9dcee_31%,#d3e2f8_46%,#dadcf0_55%,#d9dff0_60%,#d3e0f4_66%,#dcdcec_72%,#dfeaf5_80%,#dde9f5_100%)]">
      <div className="ml-[494px] flex">
        {taskIcons.map((t, i) => (
          <div key={i} className="flex h-[60px] w-[55px] flex-col items-center">
            <div className="mt-[15px] flex h-[30px] items-center">{t.el}</div>
            {t.dot && <span className="mt-[5px] h-1 w-2 rounded-full bg-[#7d828c]" />}
          </div>
        ))}
        <div className="relative mt-1.5 ml-1 flex h-12 w-12 flex-col items-center rounded-md border-r-4 border-[#e6e9f4] bg-[#f1f3fa] shadow-sm">
          <div className="mt-[9px] -ml-1"><ChromeLogo /></div>
          <span className="absolute top-[3px] right-0 flex size-5 items-center justify-center rounded-full bg-[#455a64] text-[12px] font-semibold text-[#dbe3e6]">C</span>
          <span className="absolute top-6 right-1 flex size-[15px] items-center justify-center rounded-full bg-[#455a64] text-[9px] font-semibold text-[#dbe3e6]">C</span>
          <span className="absolute bottom-0 h-1 w-5 rounded-full bg-[#0078d4]" />
        </div>
      </div>
      <div className="ml-auto flex items-center text-black">
        <svg viewBox="0 0 16 10" className="h-2.5 w-4" fill="none" stroke="#000" strokeWidth="1.400"><path d="M.5 9L8 1.500 15.500 9" /></svg>
        <svg viewBox="0 0 17 17" className="ml-3.5 size-[17px]" fill="none" stroke="#222" strokeWidth="1.200"><path d="M1 16A15 15 0 0 1 16 1M4.500 16A11.500 11.500 0 0 1 16 5M8.500 16A7.500 7.500 0 0 1 16 9" /><circle cx="14" cy="14.500" r="1.800" fill="#000" stroke="none" /></svg>
        <svg viewBox="0 0 21 15" className="ml-[11px] h-[15px] w-[21px]" fill="none" stroke="#000" strokeWidth="1.200"><path d="M1 3h4v3.500H1zM2 1v2M4 1v2M3 6.500V13h2M6 3h13v10H4.500V8M20 6v4" /><path d="M7 5h10.500v6.500H6V8z" fill="#000" /></svg>
        <svg viewBox="0 0 21 18" className="ml-2.5 h-[18px] w-[21px]" fill="none" stroke="#000" strokeWidth="1.200"><path d="M1 6h3l4-3.500v13L4 12H1zM11 6.500q1.500 2.500 0 5M14 4q3 5 0 10M17 1.500q4.500 7.500 0 15" /></svg>
        <svg viewBox="0 0 21 19" className="ml-[9px] h-[19px] w-[21px]"><path d="M4 14Q0 13 1 9.500 2 7 5 7 6 2 11 2q4 0 5 4L6 14z" fill="#8b8d90" stroke="#333" strokeWidth="1.300" /><circle cx="14.500" cy="12.500" r="5.800" fill="#e01b2b" /><path d="M12.500 10.500l4 4M16.500 10.500l-4 4" stroke="#fff" strokeWidth="1.400" /></svg>
        <div className="ml-[9px] w-[72px] text-center text-[14.5px] leading-[21px] tracking-[-0.02em] whitespace-nowrap"><div>11:36 PM</div><div>4/28/2025</div></div>
        <svg viewBox="0 0 20 20" className="ml-[21px] size-5"><path d="M0 0h20v17h-7.500L10 20l-2.500-3H0z" fill="#000" /><path d="M4 5h12M4 8.500h12M4 12h8" stroke="#fff" strokeWidth="1.200" /></svg>
        <span className="mr-[5px] ml-[25px] h-[60px] w-px bg-[#aab4be]" />
      </div>
    </div>
  );
}

export default function App() {
  return (
    <div className="flex h-[1080px] w-[1920px] flex-col overflow-hidden bg-white font-['Open_Sans',sans-serif]">
      <div className="shrink-0 bg-[#d3e3fd]">
        <TabStrip />
        <Toolbar />
      </div>
      <ConsoleHeader />
      <ServiceBar />
      <Breadcrumbs />
      <div className="flex h-[622px] shrink-0 overflow-hidden">
        <Sidebar />
        <Main />
      </div>
      <ConsoleFooter />
      <Taskbar />
    </div>
  );
}
